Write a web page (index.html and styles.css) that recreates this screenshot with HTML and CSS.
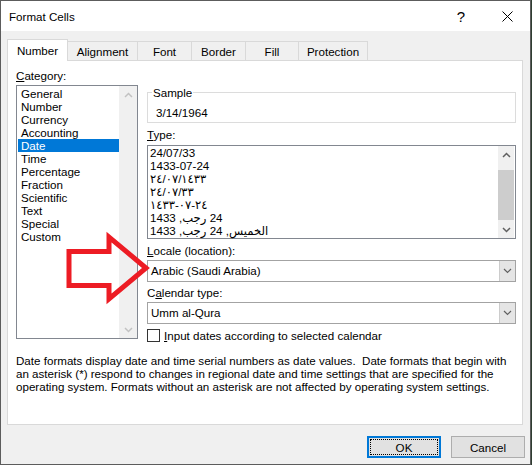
FILE: index.html
```html
<!DOCTYPE html>
<html>
<head>
<meta charset="utf-8">
<title>Format Cells</title>
<link rel="stylesheet" href="styles.css">
</head>
<body>
<div class="window">
  <div class="titlebar">
    <div class="title">Format Cells</div>
    <div class="tbtn help">?</div>
    <div class="tbtn close">
      <svg width="11" height="11" viewBox="0 0 11 11"><path d="M0.5 0.5L10.5 10.5M10.5 0.5L0.5 10.5" stroke="#000" stroke-width="1" fill="none"/></svg>
    </div>
  </div>
  <div class="main">
    <div class="tabs">
      <div class="tab sel w-number">Number</div>
      <div class="tab w-align">Alignment</div>
      <div class="tab w-font">Font</div>
      <div class="tab w-border">Border</div>
      <div class="tab w-fill">Fill</div>
      <div class="tab w-prot">Protection</div>
    </div>
    <div class="panel">
      <div class="cols">
        <div class="leftcol">
          <div class="lbl cat-lbl"><u>C</u>ategory:</div>
          <div class="listbox cat">
            <div class="items">
              <div class="item">General</div>
              <div class="item">Number</div>
              <div class="item">Currency</div>
              <div class="item">Accounting</div>
              <div class="item sel">Date</div>
              <div class="item">Time</div>
              <div class="item">Percentage</div>
              <div class="item">Fraction</div>
              <div class="item">Scientific</div>
              <div class="item">Text</div>
              <div class="item">Special</div>
              <div class="item">Custom</div>
            </div>
            <div class="vscroll cat-scroll">
              <div class="sb-btn"><svg width="9" height="6" viewBox="0 0 9 6"><path d="M1 5L4.5 1.5L8 5" stroke="#c2c2c2" stroke-width="1.5" fill="none"/></svg></div>
              <div class="sb-track"></div>
              <div class="sb-btn"><svg width="9" height="6" viewBox="0 0 9 6"><path d="M1 1L4.5 4.5L8 1" stroke="#c2c2c2" stroke-width="1.5" fill="none"/></svg></div>
            </div>
          </div>
        </div>
        <div class="rightcol">
          <fieldset class="sample">
            <legend>Sample</legend>
            <div class="sampleval">3/14/1964</div>
          </fieldset>
          <div class="lbl type-lbl"><u>T</u>ype:</div>
          <div class="listbox typebox">
            <div class="items">
              <div class="row">24/07/33</div>
              <div class="row">1433-07-24</div>
              <div class="row"><bdo dir="ltr">٢٤/٠٧/١٤٣٣</bdo></div>
              <div class="row"><bdo dir="ltr">٢٤/٠٧/٣٣</bdo></div>
              <div class="row"><bdo dir="ltr">١٤٣٣-٠٧-٢٤</bdo></div>
              <div class="row"><bdi dir="rtl">24 رجب, 1433</bdi></div>
              <div class="row"><bdi dir="rtl">الخميس, 24 رجب, 1433</bdi></div>
            </div>
            <div class="vscroll type-scroll">
              <div class="sb-btn"><svg width="9" height="6" viewBox="0 0 9 6"><path d="M1 5L4.5 1.5L8 5" stroke="#606060" stroke-width="1.5" fill="none"/></svg></div>
              <div class="sb-gap"></div>
              <div class="sb-thumb"></div>
              <div class="sb-track"></div>
              <div class="sb-btn"><svg width="9" height="6" viewBox="0 0 9 6"><path d="M1 1L4.5 4.5L8 1" stroke="#606060" stroke-width="1.5" fill="none"/></svg></div>
            </div>
          </div>
          <div class="lbl locale-lbl"><u>L</u>ocale (location):</div>
          <div class="combo">
            <div class="combo-text">Arabic (Saudi Arabia)</div>
            <div class="combo-btn"><svg width="9" height="6" viewBox="0 0 9 6"><path d="M1 1L4.5 4.5L8 1" stroke="#606060" stroke-width="1.2" fill="none"/></svg></div>
          </div>
          <div class="lbl cal-lbl">C<u>a</u>lendar type:</div>
          <div class="combo">
            <div class="combo-text">Umm al-Qura</div>
            <div class="combo-btn"><svg width="9" height="6" viewBox="0 0 9 6"><path d="M1 1L4.5 4.5L8 1" stroke="#606060" stroke-width="1.2" fill="none"/></svg></div>
          </div>
          <div class="check"><span class="box"></span><span><u>I</u>nput dates according to selected calendar</span></div>
        </div>
      </div>
      <p class="desc">Date formats display date and time serial numbers as date values.&nbsp; Date formats that begin with<br>an asterisk (*) respond to changes in regional date and time settings that are specified for the<br>operating system. Formats without an asterisk are not affected by operating system settings.</p>
    </div>
    <div class="buttons">
      <div class="btn ok"><span class="focus">OK</span></div>
      <div class="btn">Cancel</div>
    </div>
  </div>
  <svg class="callout" width="95" height="80" viewBox="0 0 95 80">
    <polygon points="9,23.5 49,23.5 49,9 86,40 49,71 49,57.5 9,57.5" fill="none" stroke="#ed1c24" stroke-width="5" stroke-linejoin="miter"/>
  </svg>
</div>
</body>
</html>
```

FILE: styles.css
```css
html, body {
  margin: 0;
  padding: 0;
}
body {
  width: 532px;
  height: 465px;
  overflow: hidden;
  background: #2f3d31;
  font-family: "Liberation Sans", "DejaVu Sans", sans-serif;
  font-size: 11.6px;
  color: #000;
}
.window {
  position: relative;
  width: 531px;
  height: 465px;
  box-sizing: border-box;
  border: 1px solid #5c5c5c;
  background: #f0f0f0;
}
.titlebar {
  height: 30px;
  background: #fff;
  display: flex;
  align-items: center;
}
.title {
  flex: 1;
  padding-left: 8px;
}
.tbtn {
  width: 46px;
  height: 30px;
  display: flex;
  align-items: center;
  justify-content: center;
}
.help {
  font-size: 15px;
}
.main {
  padding: 8px 5px 0 6px;
}
.tabs {
  display: flex;
  align-items: flex-end;
  height: 21px;
}
.tab {
  box-sizing: border-box;
  height: 19px;
  line-height: 20px;
  border: 1px solid #d9d9d9;
  border-bottom: 0;
  background: #f0f0f0;
  margin-left: -1px;
  text-align: center;
  overflow: hidden;
}
.tab.sel {
  position: relative;
  z-index: 1;
  height: 22px;
  line-height: 22px;
  margin-left: 0;
  margin-bottom: -1px;
  background: #fff;
}
.w-number { width: 61px; }
.w-align { width: 71px; }
.w-font { width: 55px; }
.w-border { width: 55px; }
.w-fill { width: 54px; }
.w-prot { width: 70px; }
.panel {
  width: 516px;
  height: 365px;
  box-sizing: border-box;
  border: 1px solid #d9d9d9;
  background: #fff;
  padding: 7px 6px 0 8px;
}
.cols {
  display: grid;
  grid-template-columns: 122px 369px;
  column-gap: 9px;
  align-items: start;
}
.lbl {
  line-height: 15px;
}
.cat-lbl {
  margin-bottom: 2px;
}
.listbox {
  box-sizing: border-box;
  border: 1px solid #828790;
  background: #fff;
  display: flex;
}
.cat {
  height: 254px;
  padding-left: 1px;
}
.items {
  flex: 1;
  min-width: 0;
}
.cat .items {
  padding-top: 1px;
}
.item {
  height: 13px;
  line-height: 13px;
  padding-left: 3px;
  white-space: nowrap;
}
.item.sel {
  background: #0078d7;
  color: #fff;
}
.vscroll {
  background: #f0f0f0;
  display: flex;
  flex-direction: column;
}
.cat-scroll {
  width: 18px;
}
.sb-btn {
  height: 17px;
  display: flex;
  align-items: center;
  justify-content: center;
  flex: none;
}
.sb-track {
  flex: 1;
}
.sb-gap {
  height: 7px;
  flex: none;
}
.sb-thumb {
  height: 50px;
  flex: none;
  background: #cdcdcd;
}
.rightcol {
  margin-top: 17px;
  display: flex;
  flex-direction: column;
}
.sample {
  margin: 0;
  padding: 0 0 0 4px;
  border: 1px solid #dcdcdc;
  min-width: 0;
}
.sample legend {
  padding: 0 1px;
  line-height: 15px;
}
.sampleval {
  margin: 5px 0 2px 4px;
  line-height: 15px;
}
.type-lbl {
  margin-top: 4px;
  margin-bottom: 3px;
}
.typebox {
  height: 94px;
}
.typebox .items {
  padding-left: 2px;
}
.row {
  height: 13px;
  line-height: 13px;
  white-space: nowrap;
}
.type-scroll {
  width: 16px;
  margin-right: 1px;
}
.locale-lbl {
  margin-top: 4px;
  margin-bottom: 2px;
}
.cal-lbl {
  margin-top: 3px;
  margin-bottom: 2px;
}
.combo {
  height: 22px;
  box-sizing: border-box;
  border: 1px solid #a3a3a3;
  background: #fff;
  display: flex;
}
.combo-text {
  flex: 1;
  padding-left: 3px;
  line-height: 20px;
}
.combo-btn {
  width: 15px;
  background: #e5e5e5;
  border-left: 1px solid #cccccc;
  display: flex;
  align-items: center;
  justify-content: center;
}
.check {
  display: flex;
  align-items: center;
  gap: 4px;
  height: 13px;
  margin-top: 5px;
  line-height: 13px;
}
.box {
  width: 13px;
  height: 13px;
  box-sizing: border-box;
  border: 1px solid #333;
  background: #fff;
  flex: none;
}
.desc {
  margin: 12px 0 0;
  line-height: 13px;
  white-space: nowrap;
}
.buttons {
  display: flex;
  justify-content: flex-end;
  gap: 10px;
  margin-top: 11px;
}
.btn {
  width: 74px;
  height: 22px;
  box-sizing: border-box;
  background: #e1e1e1;
  border: 1px solid #adadad;
  display: flex;
  align-items: center;
  justify-content: center;
}
.btn.ok {
  border: 2px solid #0078d7;
  padding: 1px;
  align-items: stretch;
}
.focus {
  flex: 1;
  border: 1px dotted #000;
  display: flex;
  align-items: center;
  justify-content: center;
}
.callout {
  position: absolute;
  left: 59px;
  top: 227px;
}
```
